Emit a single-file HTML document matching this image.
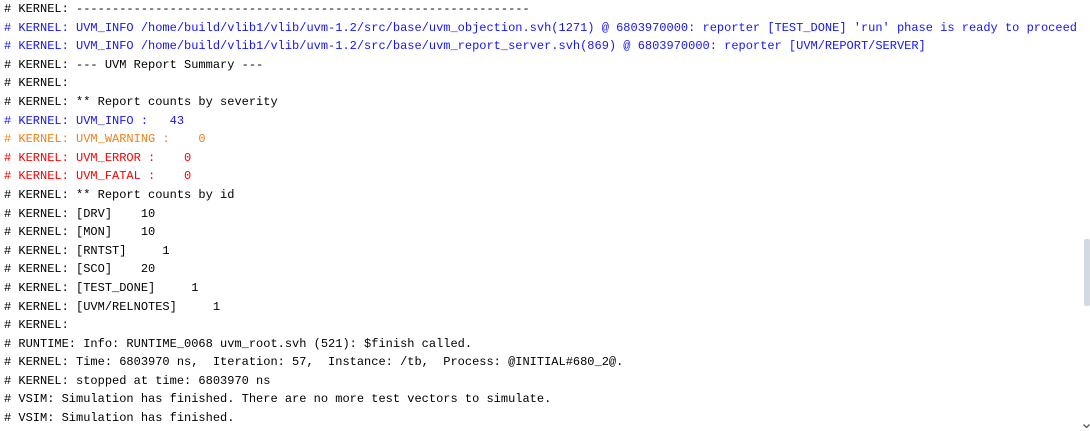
<!DOCTYPE html>
<html><head><style>
body{margin:0;width:1090px;height:431px;background:#fff;overflow:hidden;position:relative}
pre{margin:0;position:absolute;left:4px;top:0px;font-family:"Liberation Mono",monospace;font-size:12px;line-height:18.6px;color:#000}
.b{color:#1515ff}.o{color:#f0801a}.r{color:#ff0000}
.sb{position:absolute;left:1084px;top:239px;width:6px;height:67px;background:#d3dae2;border-radius:2px}
</style></head><body>
<pre># KERNEL: ---------------------------------------------------------------
<span class="b"># KERNEL: UVM_INFO /home/build/vlib1/vlib/uvm-1.2/src/base/uvm_objection.svh(1271) @ 6803970000: reporter [TEST_DONE] 'run' phase is ready to proceed</span>
<span class="b"># KERNEL: UVM_INFO /home/build/vlib1/vlib/uvm-1.2/src/base/uvm_report_server.svh(869) @ 6803970000: reporter [UVM/REPORT/SERVER]</span>
# KERNEL: --- UVM Report Summary ---
# KERNEL:
# KERNEL: ** Report counts by severity
<span class="b"># KERNEL: UVM_INFO :   43</span>
<span class="o"># KERNEL: UVM_WARNING :    0</span>
<span class="r"># KERNEL: UVM_ERROR :    0</span>
<span class="r"># KERNEL: UVM_FATAL :    0</span>
# KERNEL: ** Report counts by id
# KERNEL: [DRV]    10
# KERNEL: [MON]    10
# KERNEL: [RNTST]     1
# KERNEL: [SCO]    20
# KERNEL: [TEST_DONE]     1
# KERNEL: [UVM/RELNOTES]     1
# KERNEL:
# RUNTIME: Info: RUNTIME_0068 uvm_root.svh (521): $finish called.
# KERNEL: Time: 6803970 ns,  Iteration: 57,  Instance: /tb,  Process: @INITIAL#680_2@.
# KERNEL: stopped at time: 6803970 ns
# VSIM: Simulation has finished. There are no more test vectors to simulate.
# VSIM: Simulation has finished.</pre>
<div class="sb"></div>
<svg style="position:absolute;left:1083px;top:424px" width="7" height="5"><path d="M0.5 0.5 L3.5 3.5 L6.5 0.5" stroke="#555" stroke-width="1.3" fill="none"/></svg>
</body></html>
